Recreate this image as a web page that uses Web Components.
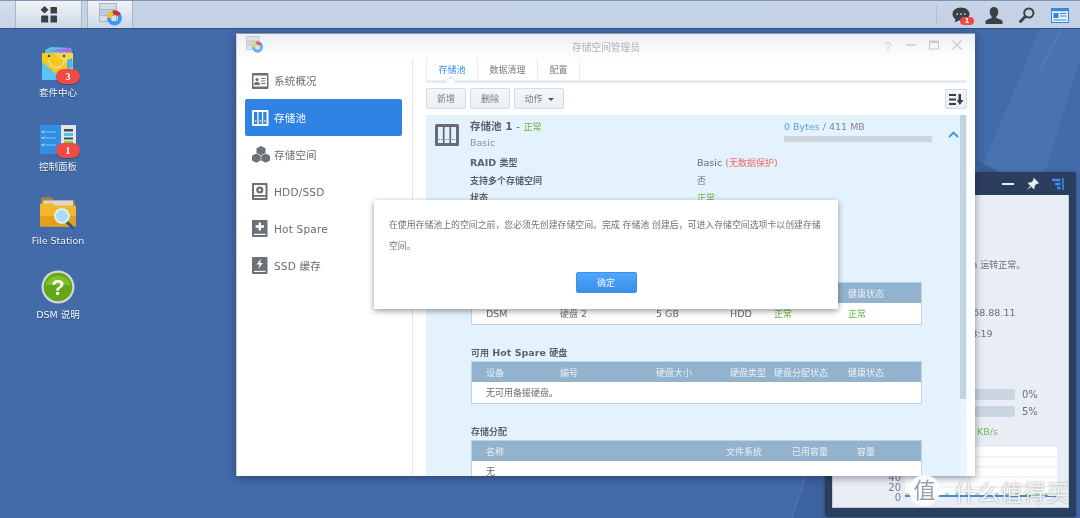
<!DOCTYPE html>
<html>
<head>
<meta charset="utf-8">
<title>DSM</title>
<style>
    html, body { margin: 0; height: 100%; }
    body { width: 1080px; height: 518px; overflow: hidden; position: relative; background: #436aa9;
        font-family: "DejaVu Sans", "Noto Sans CJK SC", sans-serif; filter: blur(.3px); }
</style>
</head>
<body>
<dsm-wallpaper></dsm-wallpaper>
<dsm-taskbar></dsm-taskbar>
<dsm-desktop>
    <desktop-icon label="套件中心" badge="3" kind="package"></desktop-icon>
    <desktop-icon label="控制面板" badge="1" kind="control"></desktop-icon>
    <desktop-icon label="File Station" kind="files"></desktop-icon>
    <desktop-icon label="DSM 说明" kind="help"></desktop-icon>
</dsm-desktop>
<status-widget></status-widget>
<storage-window></storage-window>
<notice-dialog></notice-dialog>
<water-mark></water-mark>

<script>
const ICONS = {
    launcher: `<svg width="18" height="18" viewBox="0 0 18 18" fill="#3b4047"><path d="M4.5 0 8.5 3.8 4.5 7.6 .6 3.8z"/><rect x="10.5" y="1" width="6.5" height="6.5" rx=".6"/><rect x="1.2" y="9.5" width="7" height="7" rx=".6"/><rect x="10.5" y="9.5" width="6.5" height="7" rx=".6"/></svg>`,
    storage: `<svg width="24" height="23" viewBox="0 0 24 23"><rect x="0" y="0" width="18" height="19" fill="#a9b6c4"/><rect x="1" y="1" width="16" height="5" fill="#d4dde6"/><rect x="1" y="7" width="16" height="5" fill="#bfcbd7"/><rect x="1" y="13" width="16" height="5" fill="#d4dde6"/><circle cx="15.5" cy="15" r="5.5" fill="none" stroke="#3b9af0" stroke-width="4"/><path d="M10 15A5.500 5.500 0 0 1 14 9.700" fill="none" stroke="#f4c21c" stroke-width="4"/><path d="M14 9.700A5.500 5.500 0 0 1 20 11.800" fill="none" stroke="#dc2b22" stroke-width="4"/></svg>`,
    chat: `<svg width="19" height="17" viewBox="0 0 19 17"><path d="M9.5 0C4.3 0 .5 3 .5 7c0 2.3 1.3 4.3 3.2 5.6L3 16l4.2-2.3c.7.1 1.5.2 2.3.2 5.2 0 9-3 9-6.9S14.700 0 9.500 0z" fill="#3b4047"/><circle cx="5.500" cy="7" r="1" fill="#c5d3e6"/><circle cx="9.500" cy="7" r="1" fill="#c5d3e6"/><circle cx="13.500" cy="7" r="1" fill="#c5d3e6"/></svg>`,
    user: `<svg width="18" height="17" viewBox="0 0 18 17" fill="#3b4047"><path d="M9 0c2.700 0 4.300 2 4.300 4.800 0 2-.8 3.700-1.900 4.800v1.300c2.700.9 5.600 1.800 6.100 3.300V17H.5v-2.800c.5-1.500 3.400-2.400 6.100-3.300V9.600C5.500 8.500 4.700 6.800 4.700 4.800 4.700 2 6.300 0 9 0z"/></svg>`,
    search: `<svg width="16" height="16" viewBox="0 0 16 16" fill="none" stroke="#3b4047"><circle cx="9.800" cy="6" r="4.600" stroke-width="2"/><path d="M6.300 9.600 1.500 14.500" stroke-width="2.800" stroke-linecap="round"/></svg>`,
    card: `<svg width="18" height="15" viewBox="0 0 18 15"><rect x=".5" y=".5" width="17" height="14" fill="#e8f1fb" stroke="#3a86dd"/><rect x="1" y="1" width="16" height="2.200" fill="#3a86dd"/><rect x="2.500" y="5" width="5" height="5" fill="#3a86dd"/><path d="M9 5.500h6.500M9 8h6.500M2.500 12h13" stroke="#3a86dd" stroke-width="1.200"/></svg>`,
    package: `<svg width="34" height="36" viewBox="0 0 34 36"><path d="M4 4 10 1 30 2l1 6H4z" fill="#56c6ea"/><path d="M6 5 29 2l1 4z" fill="#c45be0"/><path d="M1 7h31v27H1z" fill="#f5c81e"/><path d="M1 16 22 34H1z" fill="#5cc3f2"/><path d="M12 7 32 7V22z" fill="#f7d64c"/><path d="M8 9v5c0 10 15 10 15 0V9" fill="none" stroke="#e8d9a0" stroke-width="1.500"/><circle cx="8" cy="10" r="1.200" fill="#54421c"/><circle cx="23" cy="10" r="1.200" fill="#54421c"/><path d="M26 14l5-2 1 9-6 3z" fill="#4cb4e4"/></svg>`,
    control: `<svg width="37" height="32" viewBox="0 0 37 32"><rect x="21" y="1" width="15" height="28" fill="#dfe6ec"/><rect x="0" y="1" width="21" height="29" fill="#2f8fe0"/><path d="M5 8h11M5 14h11M5 21h11" stroke="#8cc9f4" stroke-width="1.200"/><path d="M2 7l1 2 1.500-2.500M2 13l1 2 1.500-2.500M2 20l1 2 1.500-2.500" stroke="#bfe3fa" fill="none"/><rect x="24" y="5" width="9" height="2.500" fill="#454d55"/><rect x="24" y="9" width="9" height="3" fill="#4cc3ea"/><rect x="24" y="13.500" width="9" height="2" fill="#454d55"/><rect x="24" y="17" width="9" height="3" fill="#80d41c"/></svg>`,
    files: `<svg width="38" height="34" viewBox="0 0 38 34"><path d="M2 3c0-1 .6-1.700 1.600-1.700h8.400L15 4h19c1 0 1.800.8 1.800 1.800V10H2z" fill="#a7834a"/><rect x="4" y="4.500" width="30" height="7" fill="#d8d8d0"/><path d="M1 9c0-.8.6-1.400 1.400-1.400H14l2 2h19.500c1 0 1.500.8 1.500 1.500V29c0 1-.7 1.600-1.600 1.600H2.500C1.600 30.600 1 30 1 29z" fill="#f3b72c"/><path d="M1 20h36v9c0 1-.7 1.600-1.600 1.600H2.500C1.600 30.600 1 30 1 29z" fill="#e49f1c"/><path d="M28 26l6 6" stroke="#2a5a85" stroke-width="3" stroke-linecap="round"/><circle cx="23" cy="20" r="7" fill="#a6def8" stroke="#eef4f6" stroke-width="1.600"/></svg>`,
    help: `<svg width="34" height="34" viewBox="0 0 34 34"><circle cx="17" cy="17" r="16.500" fill="#d3d8d4"/><circle cx="17" cy="17" r="14.300" fill="#62a716"/><path d="M4 15a13.500 13 0 0 1 26 0z" fill="#82bd2c"/><text x="17" y="25" text-anchor="middle" font-family="Liberation Sans" font-weight="700" font-size="22" fill="#fff">?</text></svg>`,
    overview: `<svg width="17" height="16" viewBox="0 0 17 16"><rect width="16.500" height="16" rx="1" fill="#6b7178"/><rect x="1.500" y="2.500" width="13.500" height="11" fill="#fff"/><circle cx="5" cy="6.500" r="1.600" fill="#6b7178"/><path d="M2.500 11.500c0-3 5-3 5 0zM9 5.500h4.500M9 8h4.500M9 10.500h4.500" fill="#6b7178" stroke="#6b7178"/></svg>`,
    pool: `<svg width="17" height="16" viewBox="0 0 17 16"><rect width="16.500" height="16" rx="1" fill="C"/><rect x="2" y="2" width="3.300" height="12" fill="H"/><rect x="6.600" y="2" width="3.300" height="12" fill="H"/><rect x="11.200" y="2" width="3.300" height="12" fill="H"/><path d="M3 11h1.300M7.600 11h1.300M12.200 11h1.300" stroke="C" stroke-width="1.300"/></svg>`,
    volume: `<svg width="18" height="17" viewBox="0 0 18 17" fill="#6b7178"><path d="M9 0 13.500 2.300V7L9 9.200 4.500 7V2.300z"/><path d="M4.300 7.500 8.700 9.800V14.500L4.300 16.800 0 14.500V9.800z"/><path d="M13.700 7.500 18 9.800V14.500L13.700 16.800 9.300 14.500V9.800z"/></svg>`,
    hdd: `<svg width="16" height="17" viewBox="0 0 16 17"><rect width="15.500" height="17" rx="1" fill="#6b7178"/><rect x="2" y="2" width="11.500" height="10" fill="#fff"/><circle cx="7.800" cy="7" r="3.600" fill="#6b7178"/><circle cx="7.800" cy="7" r="1.200" fill="#fff"/><rect x="2" y="13.800" width="11.500" height="1.200" fill="#fff"/></svg>`,
    spare: `<svg width="16" height="17" viewBox="0 0 16 17"><rect width="15.500" height="17" rx="1" fill="#6b7178"/><path d="M7.800 2.500v8M3.600 6.500h8.400" stroke="#fff" stroke-width="2.400"/><rect x="2" y="13.800" width="11.500" height="1.200" fill="#fff"/></svg>`,
    cache: `<svg width="16" height="17" viewBox="0 0 16 17"><rect width="15.500" height="17" rx="1" fill="#6b7178"/><path d="M9 1.500 4.500 7.500h3L6 12l5-6H8z" fill="#fff"/><rect x="2" y="13.800" width="11.500" height="1.200" fill="#fff"/></svg>`
};

// chinese runs are set a bit smaller than latin, like the original page
function cjk(text) {
    return text.replace(/[\u3000-\u30ff\u4e00-\u9fff\uff00-\uffef]+/g, '<span style="font-size:9px">$&</span>');
}

class DsmWallpaper extends HTMLElement {
    constructor() {
        super();
        this.attachShadow({ mode: 'open' }).innerHTML = `<style>
            :host { position: absolute; inset: 0; display: block; }
            svg { display: block; }
        </style>
        <svg width="1080" height="518" viewBox="0 0 1080 518">
            <rect width="1080" height="518" fill="#436aa9"/>
            <path d="M1040 28 1080 28 1080 60 1045 172 980 172z" fill="#4a72b0"/>
            <path d="M1062 28 1040 70" stroke="#5c82bb" stroke-width="1"/>
            <path d="M975 160 1000 172 980 172z" fill="#3a5f9a"/>
            <path d="M806 476 792 518 825 518 825 476z" fill="#3c639f"/>
            <path d="M806 476 792 518" stroke="#5077b3" stroke-width="1"/>
        </svg>`;
    }
}

class DsmTaskbar extends HTMLElement {
    constructor() {
        super();
        this.attachShadow({ mode: 'open' }).innerHTML = `<style>
            :host { position: absolute; left: 0; top: 0; width: 1080px; height: 29px; display: flex; box-sizing: border-box;
                background: linear-gradient(#c7d4e6, #c3d1e5); border-top: 1px solid #7f96ba; border-bottom: 1px solid #33507f; }
            .seg { width: 15px; background: linear-gradient(#d5dfec, #c8d4e5); border-right: 1px solid #a8b6c9; }
            .btn { display: flex; align-items: center; justify-content: center;
                background: linear-gradient(#f0f3f8, #ccd8e8); border-right: 1px solid #aab7c9; }
            .start { width: 65px; }
            .app { width: 44px; margin-left: 5px; border-left: 1px solid #aab7c9; }
            .app svg { margin: -1px 0 0 2px; }
            .grow { flex: 1; }
            .tray { display: flex; align-items: center; position: relative; padding-right: 11px; gap: 15px; border-left: 1px solid #b0bdd0; margin: 5px 0 4px; }
            .tray > span { display: flex; width: 18px; justify-content: center; position: relative; }
            .chat { margin-left: 15px; }
            .badge { position: absolute; left: 8px; top: 10px; width: 14px; height: 8px; border-radius: 4px; background: #f04545;
                color: #fff; font-size: 7px; line-height: 8px; text-align: center; font-weight: 700; font-style: normal; }
        </style>
        <div class="seg"></div>
        <div class="btn start">${ICONS.launcher}</div>
        <div class="btn app">${ICONS.storage}</div>
        <div class="grow"></div>
        <div class="tray">
            <span class="chat">${ICONS.chat}<i class="badge">1</i></span>
            <span>${ICONS.user}</span>
            <span>${ICONS.search}</span>
            <span>${ICONS.card}</span>
        </div>`;
    }
}

class DsmDesktop extends HTMLElement {
    constructor() {
        super();
        this.attachShadow({ mode: 'open' }).innerHTML = `<style>
            :host { position: absolute; left: 18px; top: 44px; width: 80px; display: flex; flex-direction: column; }
        </style><slot></slot>`;
    }
}

class DesktopIcon extends HTMLElement {
    constructor() {
        super();
        this.attachShadow({ mode: 'open' });
    }
    connectedCallback() {
        let badge = this.getAttribute('badge');
        this.shadowRoot.innerHTML = `<style>
            :host { display: flex; flex-direction: column; align-items: center; height: 74px; position: relative; }
            .pic { height: 38px; width: 40px; display: flex; align-items: flex-end; justify-content: center; padding-bottom: 1px; }
            .lab { margin-top: 4px; font-size: 9.5px; line-height: 12px; color: #f0f4fa; text-shadow: 0 1px 1px rgba(0,0,0,.35); white-space: nowrap; }
            .badge { position: absolute; left: 38px; top: 25px; width: 24px; height: 15px; border-radius: 8px; background: #ee4a48;
                box-shadow: 0 1px 1px rgba(0,0,0,.3); color: #fff; font: 700 10px/15px "Liberation Serif", serif; text-align: center; }
        </style>
        <div class="pic">${ICONS[this.getAttribute('kind')]}</div>
        <div class="lab">${this.getAttribute('label')}</div>
        ${badge ? `<div class="badge">${badge}</div>` : ''}`;
    }
}

class NavItem extends HTMLElement {
    constructor() {
        super();
        this.attachShadow({ mode: 'open' });
    }
    connectedCallback() {
        let active = this.hasAttribute('active');
        let icon = ICONS[this.getAttribute('icon')].replace(/fill="C"/g, 'fill="' + (active ? '#fff' : '#6b7178') + '"')
            .replace(/fill="H"/g, 'fill="' + (active ? '#2f83e4' : '#fff') + '"')
            .replace(/stroke="C"/g, 'stroke="' + (active ? '#fff' : '#6b7178') + '"');
        this.shadowRoot.innerHTML = `<style>
            :host { display: flex; align-items: center; height: 37px; padding-left: 7px; border-radius: 2px; font-size: 10.5px; color: #666c73;
                background: ${active ? '#2f83e4' : 'transparent'}; ${active ? 'color: #fff;' : ''} }
            .i { width: 22px; display: flex; }
            .t { letter-spacing: .2px; }
        </style><span class="i">${icon}</span><span class="t"><slot></slot></span>`;
    }
}

class DataTable extends HTMLElement {
    constructor() {
        super();
        this.attachShadow({ mode: 'open' });
    }
    connectedCallback() {
        let cols = this.getAttribute('cols');
        let head = this.getAttribute('head').split('|');
        let row = this.getAttribute('row') || '';
        let cells = row.split('|').map(function (c) {
            if (c.startsWith('!')) return '<span class="ok">' + cjk(c.slice(1)) + '</span>';
            return '<span>' + cjk(c) + '</span>';
        }).join('');
        this.shadowRoot.innerHTML = `<style>
            :host { display: block; width: 451px; font-size: 9.5px; box-sizing: border-box; border: 1px solid #bcd3e7; background: #fff; }
            .r { display: grid; grid-template-columns: ${cols}; padding-left: 14px; align-items: center; white-space: nowrap; }
            .h { height: 20px; background: #93b2cd; color: #e9f0f6; font-size: 9px; }
            .b { height: 21px; color: #676d74; }
            .ok { color: #6cb33f; }
        </style>
        <div class="r h">${head.map(h => '<span>' + h + '</span>').join('')}</div>
        <div class="r b">${cells}</div>`;
    }
}

class PoolPanel extends HTMLElement {
    constructor() {
        super();
        this.attachShadow({ mode: 'open' }).innerHTML = `<style>
            :host { display: block; position: relative; height: 361px; overflow: hidden; background: #e4f2fd; color: #666c73; font-size: 9.5px; }
            .bar { position: absolute; right: 1px; top: 0; width: 6px; height: 284px; background: #c3d3e0; }
            .track { position: absolute; right: 0; top: 0; width: 7px; height: 100%; background: #eaf4fc; }
            .head { display: flex; height: 39px; }
            .ico { margin: 9px 0 0 9px; width: 24px; height: 22px; }
            .txt { margin: 3px 0 0 11px; width: 314px; }
            .name { line-height: 16px; font-weight: 700; font-size: 10.5px; color: #5d636a; }
            .name i { font-style: normal; font-weight: 400; font-size: 9px; color: #6cb33f; }
            .basic { line-height: 16px; color: #8b9299; }
            .use { margin-top: 4px; width: 148px; line-height: 16px; color: #7f868d; }
            .use b { font-weight: 400; color: #5b9ee8; }
            .use div { height: 6px; margin-top: 1px; background: #cbd6e0; }
            .chev { margin: 16px 0 0 16px; }
            .rows { display: grid; grid-template-columns: 227px 1fr; grid-auto-rows: 17.5px; align-content: start; margin-left: 44px; line-height: 17.5px; height: 86.5px; }
            .rows b { color: #5d636a; }
            .red { color: #ee6a6a; }
            .ok { color: #6cb33f; }
            section { margin-left: 45px; }
            h4 { margin: 20px 0 0; height: 16px; line-height: 16px; font-size: 9.5px; color: #5d636a; }
            section.first { margin-top: 41.5px; }
        </style>
        <div class="track"></div><div class="bar"></div>
        <div class="head">
            <svg class="ico" viewBox="0 0 24 22"><rect width="24" height="22" rx="1.5" fill="#666c75"/><rect x="3" y="3" width="4.8" height="16" fill="#e4f2fd"/><rect x="9.6" y="3" width="4.8" height="16" fill="#e4f2fd"/><rect x="16.2" y="3" width="4.8" height="16" fill="#e4f2fd"/><path d="M4 15.5h1M6 15.5h1M10.600 15.500h1M12.600 15.500h1M17.200 15.500h1M19.200 15.500h1" stroke="#666c75"/></svg>
            <div class="txt">
                <div class="name">存储池 1 <span style="font-weight:400">-</span> <i>正常</i></div>
                <div class="basic">Basic</div>
            </div>
            <div class="use"><b>0 Bytes</b> / 411 MB<div></div></div>
            <svg class="chev" width="11" height="7" viewBox="0 0 11 7"><path d="M1 6 5.500 1.500 10 6" fill="none" stroke="#3b90ee" stroke-width="1.800"/></svg>
        </div>
        <div class="rows">
            <b>${cjk('RAID 类型')}</b><span>Basic <span class="red">${cjk('(无数据保护)')}</span></span>
            <b>${cjk('支持多个存储空间')}</b><span>${cjk('否')}</span>
            <b>${cjk('状态')}</b><span class="ok">${cjk('正常')}</span>
        </div>
        <section class="first">
            <data-table cols="74px 96px 74px 44px 74px 1fr" head="设备|编号|硬盘大小|硬盘类型|硬盘分配状态|健康状态" row="DSM|硬盘 2|5 GB|HDD|!正常|!正常"></data-table>
        </section>
        <section>
            <h4>${cjk('可用 Hot Spare 硬盘')}</h4>
            <data-table cols="74px 96px 74px 44px 74px 1fr" head="设备|编号|硬盘大小|硬盘类型|硬盘分配状态|健康状态" row="无可用备援硬盘。"></data-table>
        </section>
        <section>
            <h4>${cjk('存储分配')}</h4>
            <data-table cols="240px 66px 65px 1fr" head="名称|文件系统|已用容量|容量" row="无"></data-table>
        </section>`;
    }
}

class StorageWindow extends HTMLElement {
    constructor() {
        super();
        this.attachShadow({ mode: 'open' }).innerHTML = `<style>
            :host { position: absolute; left: 236px; top: 33px; width: 739px; height: 443px; display: flex; flex-direction: column;
                background: #fff; border-top: 1px solid #8b9bb0; border-left: 1px solid #c7d2e2; box-sizing: border-box; box-shadow: 0 2px 8px rgba(20,30,50,.45); overflow: hidden; }
            .title { height: 25px; flex: none; display: flex; align-items: center; position: relative; background: linear-gradient(#eceff3, #fff); }
            .title svg.logo { margin-left: 9px; opacity: .75; }
            .cap { flex: 1; text-align: center; font-size: 9.7px; color: #aeb3b9; margin-left: 68px; }
            .ctl { display: flex; gap: 7px; padding-right: 10px; color: #c5cbd3; }
            .ctl span { width: 16px; display: flex; justify-content: center; font: 12px/14px "Liberation Sans", sans-serif; }
            .main { flex: 1; display: flex; min-height: 0; }
            nav { width: 176px; flex: none; box-sizing: border-box; padding: 3px 10px 0 8px; border-right: 1px solid #e3e6ea; }
            .content { flex: 1; min-width: 0; display: flex; flex-direction: column; padding: 0 8px 0 13px; }
            .tabs { display: flex; height: 21px; flex: none; border-bottom: 3px solid #e9ecef; position: relative; font-size: 9px; color: #777d84; }
            .tabs span { display: flex; align-items: center; justify-content: center; border-right: 1px solid #e9ecef; height: 20px; }
            .tabs .on { color: #3b90ee; width: 50px; border-left: 1px solid #e9ecef; }
            .tabs .on::after { content: ""; position: absolute; left: 21px; top: 18px; width: 6px; height: 6px; background: #fff; border: 1px solid #e2e5e9; border-width: 1px 0 0 1px; transform: rotate(45deg); }
            .tool { display: flex; gap: 4px; height: 21px; margin: 5px 0 6px; flex: none; }
            .tool button { margin: 0; padding: 0; width: 40px; height: 21px; background: linear-gradient(#f4f6f9, #ebeff4); border: 1px solid #d5dbe2; border-radius: 2px; font: inherit; font-size: 9px; color: #777d84; }
            .tool .act { width: 50px; }
            .tool .act::after { content: ""; display: inline-block; border: 3px solid transparent; border-top-color: #555; border-bottom-width: 0; margin: 0 0 1px 5px; }
            .tool .sort { margin-left: auto; width: 22px; height: 20px; display: flex; align-items: center; justify-content: center; margin-top: 1px; }
        </style>
        <div class="title">
            <span class="logo-wrap">${ICONS.storage.replace('<svg width="24" height="23"', '<svg class="logo" width="18" height="17"')}</span>
            <div class="cap">存储空间管理员</div>
            <div class="ctl">
                <span style="color:#ccd1d7">?</span>
                <span><svg width="10" height="10"><path d="M0 5h10" stroke="#c5cbd3" stroke-width="1.5"/></svg></span>
                <span><svg width="10" height="10"><rect x=".5" y="1" width="9" height="8" fill="none" stroke="#c5cbd3"/><path d="M0 2h10" stroke="#c5cbd3" stroke-width="2"/></svg></span>
                <span><svg width="10" height="10"><path d="M.5.5 9.500 9.500M9.500.5.500 9.500" stroke="#c5cbd3" stroke-width="1.300"/></svg></span>
            </div>
        </div>
        <div class="main">
            <nav>
                <nav-item icon="overview">系统概况</nav-item>
                <nav-item icon="pool" active>存储池</nav-item>
                <nav-item icon="volume">存储空间</nav-item>
                <nav-item icon="hdd">HDD/SSD</nav-item>
                <nav-item icon="spare">Hot Spare</nav-item>
                <nav-item icon="cache">SSD 缓存</nav-item>
            </nav>
            <div class="content">
                <div class="tabs">
                    <span class="on">存储池</span>
                    <span style="width:59px">数据清理</span>
                    <span style="width:41px">配置</span>
                </div>
                <div class="tool">
                    <button>新增</button><button>删除</button><button class="act">动作</button>
                    <button class="sort"><svg width="15" height="11" viewBox="0 0 15 11" fill="#3b4047"><rect y="0" width="7" height="2"/><rect y="4.5" width="7" height="2"/><rect y="9" width="7" height="2"/><path d="M9.500 0h2.500v6h2.500L10.800 11 7.800 6h1.700z"/></svg></button>
                </div>
                <pool-panel></pool-panel>
            </div>
        </div>`;
    }
}

class NoticeDialog extends HTMLElement {
    constructor() {
        super();
        this.attachShadow({ mode: 'open' }).innerHTML = `<style>
            :host { position: absolute; left: 374px; top: 200px; width: 464px; height: 109px; box-sizing: border-box; padding: 15px 15px 0; display: flex; flex-direction: column;
                background: #fff; box-shadow: 0 2px 6px rgba(0,0,0,.4); }
            p { margin: 0; font-size: 8.9px; line-height: 21px; color: #6b7178; height: 42px; }
            button { margin: 15px auto 0; width: 61px; height: 21px; padding: 0; border: 1px solid #3f8fe6; border-radius: 2px; background: linear-gradient(#4ea7fb, #3a8dea);
                color: #eaf4ff; font: inherit; font-size: 9px; }
        </style>
        <p>在使用存储池上的空间之前，您必须先创建存储空间。完成 存储池 创建后，可进入存储空间选项卡以创建存储空间。</p>
        <button>确定</button>`;
    }
}

class StatusWidget extends HTMLElement {
    constructor() {
        super();
        this.attachShadow({ mode: 'open' }).innerHTML = `<style>
            :host { position: absolute; left: 825px; top: 172px; width: 251px; height: 345px; box-sizing: border-box; padding: 0 7px 9px; display: flex; flex-direction: column;
                background: #2c3e5e; border-radius: 3px; box-shadow: 0 1px 4px rgba(0,0,0,.3); }
            .bar { height: 23px; flex: none; display: flex; align-items: center; justify-content: flex-end; gap: 13px; padding-right: 5px; }
            .body { flex: 1; background: #e9eef6; border: 1px solid #c3cedd; border-width: 0 1px 1px; font-size: 9.5px; color: #6b7178; display: flex; flex-direction: column; min-height: 0; overflow: hidden; }
            .msg { margin: 63px 0 0 90px; line-height: 13px; white-space: nowrap; }
            .ip { margin: 34px 0 0 113px; line-height: 13px; }
            .time { margin: 8px 0 0 117px; line-height: 13px; }
            .res { display: flex; align-items: center; margin: 0 0 0 68px; height: 11px; }
            .res i { width: 114px; height: 11px; border-radius: 2px; background: #cbd5e2; flex: none; }
            .res span { margin-left: 7px; font-size: 10px; }
            .res.a { margin-top: 49px; }
            .res.b { margin-top: 6px; }
            .net { margin: 8px 0 0 135px; color: #76bb45; line-height: 13px; }
            .chart { display: flex; margin-top: 9px; height: 50px; }
            .axis { width: 72px; flex: none; position: relative; font-size: 10px; color: #7a8088; text-align: right; }
            .axis span { position: absolute; right: 4px; line-height: 10px; }
            .plot { width: 152px; background: #fff; position: relative; }
            .plot svg { display: block; }
        </style>
        <div class="bar">
            <svg width="12" height="12"><path d="M0 6h12" stroke="#e8edf4" stroke-width="2"/></svg>
            <svg width="12" height="12" viewBox="0 0 12 12"><path d="M7 0 12 5 10.800 6 10 5.500 7.600 8 7.600 10.500 6.600 11 1 5.500 1.800 4.300 4 4.500 6.500 2 6 1z M3 8 0 12 4 9z" fill="#e8edf4"/></svg>
            <svg width="12" height="12" viewBox="0 0 12 12"><path d="M0 2h8.500M3 6h5.500M5 10h3.500" stroke="#3b90ee" stroke-width="2.500"/><path d="M11 0v12" stroke="#3b90ee" stroke-width="1.500"/></svg>
        </div>
        <div class="body">
            <div class="msg">${cjk('DiskStation 运转正常。')}</div>
            <div class="ip">192.168.88.11</div>
            <div class="time">00:08:19</div>
            <div class="res a"><i></i><span>0%</span></div>
            <div class="res b"><i></i><span>5%</span></div>
            <div class="net">8 KB/s</div>
            <div class="chart">
                <div class="axis"><span style="top:26px">40</span><span style="top:36px">20</span><span style="top:46px">0</span></div>
                <div class="plot"><svg width="152" height="50"><path d="M0 10h152M0 20h152M0 30h152M0 40h152" stroke="#e3ebf4"/><path d="M0 49h152" stroke="#3b8ee6" stroke-width="2"/><path d="M0 47h152" stroke="#7cc243" stroke-width="1" stroke-dasharray="4 6"/></svg></div>
            </div>
        </div>`;
    }
}

class WaterMark extends HTMLElement {
    constructor() {
        super();
        this.attachShadow({ mode: 'open' }).innerHTML = `<style>
            :host { position: absolute; left: 909px; top: 474px; height: 33px; display: flex; align-items: center; gap: 14px; pointer-events: none; }
            .c { width: 31px; height: 31px; border-radius: 50%; background: rgba(255,255,255,.92); color: #9aa0a6; font-size: 22px; line-height: 31px; text-align: center; }
            .t { font-size: 23px; color: rgba(255,255,255,.85); text-shadow: 0 0 2px rgba(90,90,90,.7); white-space: nowrap; }
        </style><span class="c">值</span><span class="t">什么值得买</span>`;
    }
}

customElements.define('dsm-wallpaper', DsmWallpaper);
customElements.define('dsm-taskbar', DsmTaskbar);
customElements.define('dsm-desktop', DsmDesktop);
customElements.define('desktop-icon', DesktopIcon);
customElements.define('nav-item', NavItem);
customElements.define('data-table', DataTable);
customElements.define('pool-panel', PoolPanel);
customElements.define('storage-window', StorageWindow);
customElements.define('notice-dialog', NoticeDialog);
customElements.define('status-widget', StatusWidget);
customElements.define('water-mark', WaterMark);
</script>
</body>
</html>
